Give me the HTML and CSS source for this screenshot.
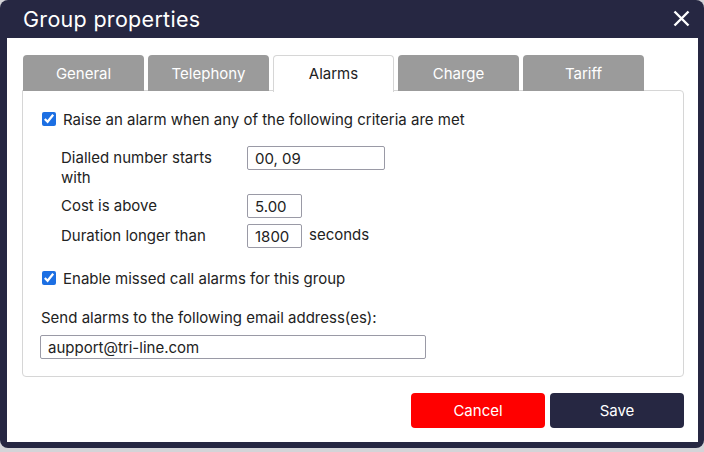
FILE: index.html
```html
<!DOCTYPE html>
<html>
<head>
  <title>Group properties</title>
  <link rel="stylesheet" href="styles.css">
</head>
<body>
  <div class="dialog">
    <div class="dialog-header">
      <span class="dialog-title">Group properties</span>
      <svg class="close-icon" width="17" height="17" viewBox="0 0 17 17">
        <path d="M1.5 1.5 L15.5 15.5 M15.5 1.5 L1.5 15.5" stroke="#fff" stroke-width="2.4" fill="none"/>
      </svg>
    </div>
    <div class="dialog-body">
      <div class="tabs">
        <div class="tab">General</div>
        <div class="tab">Telephony</div>
        <div class="tab active">Alarms</div>
        <div class="tab">Charge</div>
        <div class="tab">Tariff</div>
      </div>
      <div class="panel">
        <label class="check-row">
          <input type="checkbox" checked>
          <span>Raise an alarm when any of the following criteria are met</span>
        </label>
        <div class="criteria">
          <div class="criteria-row">
            <div class="criteria-label">Dialled number starts with</div>
            <input class="text-input wide" value="00, 09">
          </div>
          <div class="criteria-row">
            <div class="criteria-label">Cost is above</div>
            <input class="text-input short" value="5.00">
          </div>
          <div class="criteria-row">
            <div class="criteria-label">Duration longer than</div>
            <input class="text-input short" value="1800">
            <span class="unit">seconds</span>
          </div>
        </div>
        <label class="check-row missed">
          <input type="checkbox" checked>
          <span>Enable missed call alarms for this group</span>
        </label>
        <div class="email-label">Send alarms to the following email address(es):</div>
        <input class="text-input email" value="aupport@tri-line.com">
      </div>
      <div class="actions">
        <button class="btn cancel">Cancel</button>
        <button class="btn save">Save</button>
      </div>
    </div>
  </div>
</body>
</html>
```

FILE: styles.css
```css
body {
  margin: 0;
  padding: 0;
  background-color: #d4d4d8;
  font-family: Inter, "Liberation Sans", sans-serif;
  color: #222;
}

.dialog {
  width: 704px;
  height: 448px;
  box-sizing: border-box;
  background-color: #262742;
  border-radius: 8px;
  padding: 0 6px 6px 7px;
  display: flex;
  flex-direction: column;
}

.dialog-header {
  height: 38px;
  display: flex;
  align-items: center;
  justify-content: space-between;
  padding: 0 8px 0 16px;
}

.dialog-title {
  color: #fff;
  font-size: 21.5px;
  letter-spacing: 0.3px;
}

.close-icon {
  display: block;
  margin-top: -2px;
}

.dialog-body {
  flex: 1;
  background-color: #fff;
  padding: 17px 14px 14px 15px;
  display: flex;
  flex-direction: column;
}

.tabs {
  display: flex;
  gap: 4px;
  margin-left: 1px;
  height: 36px;
  position: relative;
  z-index: 1;
}

.tab {
  width: 121px;
  box-sizing: border-box;
  background-color: #9b9b9b;
  color: #fff;
  font-size: 15px;
  text-align: center;
  padding-top: 9px;
  border-radius: 4px 4px 0 0;
}

.tab.active {
  background-color: #fff;
  color: #222;
  border: 1px solid #d6d6d6;
  border-bottom: none;
  padding-top: 8px;
  height: 37px;
}

.panel {
  height: 287px;
  box-sizing: border-box;
  border: 1px solid #d6d6d6;
  border-radius: 0 4px 4px 4px;
  padding: 19px 19px 0 18px;
  margin-top: -1px;
  font-size: 15px;
}

.check-row {
  display: flex;
  align-items: center;
  gap: 7px;
  height: 18px;
}

.check-row input {
  margin: 0 0 0 1px;
  width: 14px;
  height: 14px;
  accent-color: #1c6fe3;
}

.criteria {
  margin: 18px 0 0 20px;
  display: flex;
  flex-direction: column;
  gap: 6px;
}

.criteria-row {
  display: flex;
  align-items: flex-start;
}

.criteria-label {
  width: 167px;
  margin-right: 19px;
  line-height: 20px;
  padding-top: 2px;
}

.text-input {
  height: 24px;
  box-sizing: border-box;
  border: 1px solid #9a9aa6;
  border-radius: 2px;
  padding: 0 7px;
  font-family: Inter, "Liberation Sans", sans-serif;
  font-size: 15px;
  color: #222;
}

.wide {
  width: 138px;
}

.short {
  width: 55px;
}

.unit {
  margin-left: 7px;
  line-height: 21px;
}

.missed {
  margin-top: 21px;
}

.email-label {
  margin-top: 22px;
  line-height: 18px;
}

.email {
  display: block;
  margin-top: 8px;
  margin-left: -1px;
  width: 386px;
}

.actions {
  display: flex;
  justify-content: flex-end;
  gap: 5px;
  margin-top: 16px;
}

.btn {
  width: 134px;
  height: 35px;
  border: none;
  border-radius: 4px;
  color: #fff;
  font-family: Inter, "Liberation Sans", sans-serif;
  font-size: 15px;
  cursor: pointer;
}

.cancel {
  background-color: #ff0000;
}

.save {
  background-color: #262742;
}
```
